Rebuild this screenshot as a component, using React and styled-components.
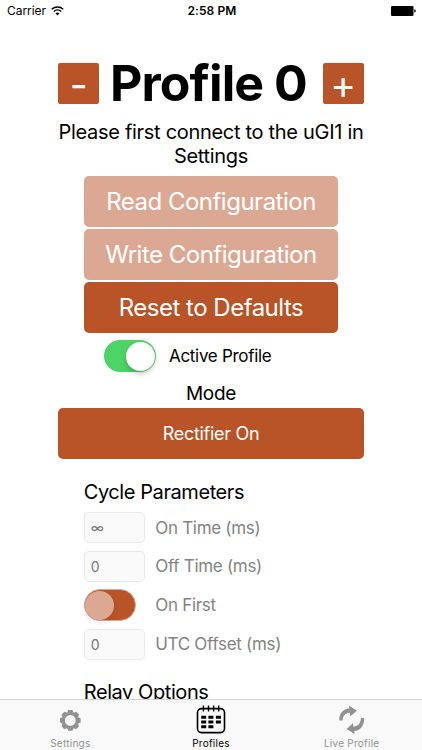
import styled, { createGlobalStyle, css } from "styled-components";

const GlobalStyle = createGlobalStyle`
  :root {
    --primary: #b85427;
    --primary-disabled: #dba993;
    --green: #4cd464;
    --grey: #838383;
    --bar-bg: #f9f9f9;
  }
  * {
    box-sizing: border-box;
  }
  body {
    margin: 0;
    background-color: #fff;
    color: #000;
    font-family: Inter, "Liberation Sans", sans-serif;
  }
  button,
  input {
    font-family: inherit;
    margin: 0;
  }
`;

const Screen = styled.div`
  display: flex;
  flex-direction: column;
  width: 422px;
  height: 750px;
  overflow: hidden;
`;

const StatusBar = styled.header`
  display: grid;
  grid-template-columns: 1fr auto 1fr;
  align-items: center;
  flex: none;
  height: 22px;
  padding: 0 6px 0 7px;
  font-size: 12px;
  line-height: 22px;
`;

const Carrier = styled.div`
  display: flex;
  align-items: center;
  gap: 5.5px;
  letter-spacing: -0.05px;
`;

const Clock = styled.div`
  padding-left: 1px;
  font-weight: 600;
  letter-spacing: 0.1px;
`;

const Battery = styled.svg`
  justify-self: end;
`;

const Content = styled.main`
  display: flex;
  flex-direction: column;
  align-items: center;
  flex: 1;
  min-height: 0;
  padding-top: 40.5px;
  overflow: hidden;
`;

const TitleRow = styled.div`
  display: flex;
  align-items: center;
  justify-content: space-between;
  flex: none;
  width: 305.5px;
  height: 41px;
`;

const Title = styled.h1`
  margin: 0;
  padding-right: 5px;
  font-size: 50px;
  font-weight: 700;
  line-height: 41px;
  letter-spacing: -0.9px;
  white-space: nowrap;
`;

const StepButton = styled.button`
  display: flex;
  align-items: center;
  justify-content: center;
  width: 41px;
  height: 41px;
  padding: 3px 0 0;
  border: none;
  border-radius: 2px;
  background-color: var(--primary);
  color: #fff;
  font-size: 39px;
  line-height: 38px;
`;

const Notice = styled.p`
  flex: none;
  width: 330px;
  margin: 16.5px 0 8px;
  font-size: 20px;
  line-height: 24px;
  letter-spacing: -0.3px;
  text-align: center;
`;

const ButtonStack = styled.div`
  display: flex;
  flex-direction: column;
  flex: none;
  gap: 2px;
  width: 254.5px;
`;

const Button = styled.button`
  flex: none;
  width: 100%;
  height: 51px;
  padding: 1px 0 0;
  border: none;
  border-radius: 5px;
  background-color: var(--primary);
  color: #fff;
  font-size: 24px;
  line-height: 50px;
  letter-spacing: -0.5px;
  &:disabled {
    background-color: var(--primary-disabled);
  }
`;

const ModeButton = styled(Button)`
  width: 305.5px;
  padding: 0;
  font-size: 18px;
  letter-spacing: -0.3px;
`;

const ActiveRow = styled.label`
  display: flex;
  align-items: center;
  align-self: flex-start;
  flex: none;
  gap: 13px;
  height: 32px;
  margin: 7px 0 0 104px;
  font-size: 17px;
  letter-spacing: -0.3px;
`;

const Track = styled.span`
  display: flex;
  align-items: center;
  flex: none;
  width: 52px;
  height: 32px;
  padding: 1.5px;
  border-radius: 16px;
  ${(props) =>
    props.$on
      ? css`
          justify-content: flex-end;
          background-color: var(--green);
        `
      : css`
          padding: 0;
          border: 1.5px solid var(--primary-disabled);
          background-color: var(--primary);
        `}
`;

const Thumb = styled.span`
  width: 29px;
  height: 29px;
  border-radius: 50%;
  background-color: ${(props) =>
    props.$on ? "#fff" : "var(--primary-disabled)"};
  box-shadow: 0 3px 5px rgba(0, 0, 0, ${(props) => (props.$on ? 0.2 : 0.08)});
`;

const ModeLabel = styled.h2`
  flex: none;
  margin: 9.5px 0 2.5px;
  font-size: 19px;
  font-weight: 400;
  line-height: 24px;
  letter-spacing: -0.3px;
`;

const Section = styled.section`
  display: flex;
  flex-direction: column;
  flex: none;
  width: 254.5px;
  margin-top: ${(props) => props.$top}px;
`;

const SectionTitle = styled.h2`
  margin: 0;
  font-size: 20px;
  font-weight: 400;
  line-height: 24px;
  letter-spacing: -0.42px;
`;

const Fields = styled.div`
  display: flex;
  flex-direction: column;
  gap: 7.6px;
  margin-top: 8.5px;
`;

const Field = styled.label`
  display: grid;
  grid-template-columns: 61.5px 1fr;
  align-items: center;
  column-gap: 10px;
  min-height: 31px;
  color: var(--grey);
  font-size: 17px;
  letter-spacing: -0.3px;
`;

const Input = styled.input`
  width: 100%;
  height: 31px;
  padding: 0 6px;
  border: 1px solid #e9e9e9;
  border-radius: 5px;
  background-color: #fafafa;
  color: #777;
  font-size: 14px;
  &:disabled {
    opacity: 1;
  }
`;

const TabBar = styled.nav`
  display: grid;
  grid-template-columns: repeat(3, 1fr);
  flex: none;
  height: 51px;
  border-top: 1px solid #d5d5d5;
  background-color: var(--bar-bg);
`;

const Tab = styled.a`
  display: flex;
  flex-direction: column;
  align-items: center;
  color: ${(props) => (props.$active ? "#000" : "#929292")};
  font-size: 10px;
  line-height: 12px;
  letter-spacing: 0.25px;
  svg {
    flex: none;
    margin: 4px 0 1px;
  }
`;

function WifiIcon() {
  return (
    <svg width="13" height="10" viewBox="0 0 13 10" fill="none">
      <path d="M.8 3.3a8.3 8.3 0 0 1 11.4 0" stroke="#000" strokeWidth="1.5" />
      <path d="M2.8 5.5a5.5 5.5 0 0 1 7.4 0" stroke="#000" strokeWidth="1.4" />
      <path d="M4.5 7.3a3 3 0 0 1 4 0l-2 2.1z" fill="#000" />
    </svg>
  );
}

function BatteryIcon() {
  return (
    <Battery width="25" height="10" viewBox="0 0 25 10">
      <rect x="0" y="0" width="22.5" height="10" rx="1.3" />
      <path d="M23.3 3.3q1.5.3 1.5 1.7t-1.5 1.7z" />
    </Battery>
  );
}

function GearIcon() {
  const teeth = [0, 45, 90, 135, 180, 225, 270, 315];
  return (
    <svg width="32" height="32" viewBox="0 0 32 32">
      <circle cx="16.3" cy="16.4" r="7" fill="none" stroke="#929292" strokeWidth="3.2" />
      {teeth.map((angle) => (
        <path
          key={angle}
          d="M13.2 8.8l1-2.7h4.2l1 2.7z"
          fill="#929292"
          transform={`rotate(${angle} 16.3 16.4)`}
        />
      ))}
    </svg>
  );
}

function CalendarIcon() {
  return (
    <svg width="32" height="32" viewBox="0 0 32 32">
      <rect x="2.5" y="4.6" width="27" height="24" rx="4" fill="none" stroke="#000" strokeWidth="1.6" />
      <path d="M8.4 1.5v6M13.5 1.5v6M18.6 1.5v6M23.7 1.5v6" stroke="#000" strokeWidth="1.4" />
      <path
        d="M6.2 13.2h5M13.4 13.2h5M20.9 13.2h5M6.2 18h5M13.4 18h5M20.9 18h5M6.2 22.7h5M13.4 22.7h5"
        stroke="#000"
        strokeWidth="3"
      />
    </svg>
  );
}

function RefreshIcon() {
  return (
    <svg width="32" height="32" viewBox="0 0 32 32">
      <path d="M3.3 16.6C3 9.2 7.3 4.8 13.3 4.4L12.8 1.6L20.9 6.8L14.4 12.3L13.8 8.8C9 9.4 6.6 12 6.6 16.6z" fill="#929292" />
      <path d="M28.1 14C28.6 21.4 24.2 26.6 18.2 27.1L18.7 30L10.6 25.1L16.9 19.2L17.6 22.7C22.4 22 24.9 19 24.9 14z" fill="#929292" />
    </svg>
  );
}

function Switch({ on }) {
  return (
    <Track $on={on} role="switch" aria-checked={on}>
      <Thumb $on={on} />
    </Track>
  );
}

export default function App() {
  return (
    <>
      <GlobalStyle />
      <Screen>
        <StatusBar>
          <Carrier>
            Carrier
            <WifiIcon />
          </Carrier>
          <Clock>2:58 PM</Clock>
          <BatteryIcon />
        </StatusBar>

        <Content>
          <TitleRow>
            <StepButton>-</StepButton>
            <Title>Profile 0</Title>
            <StepButton>+</StepButton>
          </TitleRow>
          <Notice>
            Please first connect to the uGI1 in
            <br />
            Settings
          </Notice>
          <ButtonStack>
            <Button disabled>Read Configuration</Button>
            <Button disabled>Write Configuration</Button>
            <Button>Reset to Defaults</Button>
          </ButtonStack>
          <ActiveRow>
            <Switch on />
            Active Profile
          </ActiveRow>
          <ModeLabel>Mode</ModeLabel>
          <ModeButton>Rectifier On</ModeButton>

          <Section $top={20.5}>
            <SectionTitle>Cycle Parameters</SectionTitle>
            <Fields>
              <Field>
                <Input disabled value="∞" />
                On Time (ms)
              </Field>
              <Field>
                <Input disabled value="0" />
                Off Time (ms)
              </Field>
              <Field>
                <Switch on={false} />
                On First
              </Field>
              <Field>
                <Input disabled value="0" />
                UTC Offset (ms)
              </Field>
            </Fields>
          </Section>
          <Section $top={20.5}>
            <SectionTitle>Relay Options</SectionTitle>
          </Section>
        </Content>

        <TabBar>
          <Tab>
            <GearIcon />
            Settings
          </Tab>
          <Tab $active>
            <CalendarIcon />
            Profiles
          </Tab>
          <Tab>
            <RefreshIcon />
            Live Profile
          </Tab>
        </TabBar>
      </Screen>
    </>
  );
}
